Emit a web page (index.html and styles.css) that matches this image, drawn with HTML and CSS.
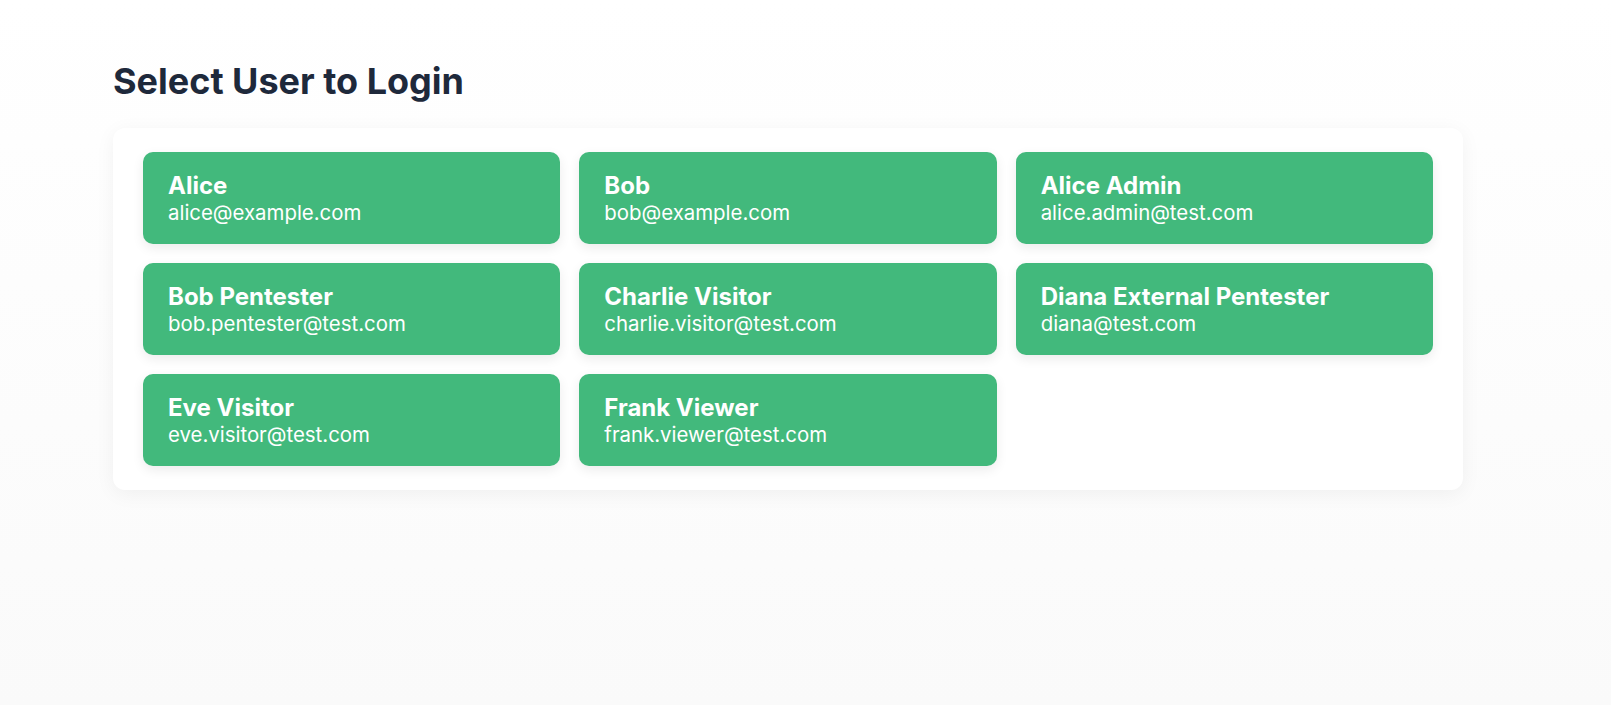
FILE: index.html
```html
<!DOCTYPE html>
<html lang="en">
<head>
<meta charset="utf-8">
<title>Select User to Login</title>
<link rel="stylesheet" href="styles.css">
</head>
<body>
<main class="page">
  <h1 class="title">Select User to Login</h1>
  <section class="panel">
    <div class="grid">
      <button class="user"><span class="name">Alice</span><span class="email">alice@example.com</span></button>
      <button class="user"><span class="name">Bob</span><span class="email">bob@example.com</span></button>
      <button class="user"><span class="name">Alice Admin</span><span class="email">alice.admin@test.com</span></button>
      <button class="user"><span class="name">Bob Pentester</span><span class="email">bob.pentester@test.com</span></button>
      <button class="user"><span class="name">Charlie Visitor</span><span class="email">charlie.visitor@test.com</span></button>
      <button class="user"><span class="name">Diana External Pentester</span><span class="email">diana@test.com</span></button>
      <button class="user"><span class="name">Eve Visitor</span><span class="email">eve.visitor@test.com</span></button>
      <button class="user"><span class="name">Frank Viewer</span><span class="email">frank.viewer@test.com</span></button>
    </div>
  </section>
</main>
</body>
</html>
```
FILE: styles.css
```css
* { box-sizing: border-box; }
html, body { margin: 0; height: 100%; }
body {
  font-family: Inter, "Noto Sans", sans-serif;
  background: linear-gradient(180deg, #ffffff 0%, #fafafa 100%);
  min-height: 705px;
}
.page {
  padding: 59px 148px 0 113px;
}
.title {
  margin: 0 0 25px 0;
  font-size: 36px;
  line-height: 44px;
  font-weight: 700;
  color: #1e293b;
}
.panel {
  background: #fff;
  border-radius: 12px;
  padding: 24px 30px;
  box-shadow: 0 4px 20px rgba(0, 0, 0, 0.05);
}
.grid {
  display: grid;
  grid-template-columns: repeat(3, 1fr);
  gap: 19px;
}
.user {
  display: flex;
  flex-direction: column;
  align-items: flex-start;
  height: 92px;
  padding: 19px 25px 0;
  border: none;
  border-radius: 10px;
  background: #42b97c;
  color: #fff;
  font-family: inherit;
  text-align: left;
  box-shadow: 0 4px 12px rgba(0, 0, 0, 0.08);
  cursor: pointer;
}
.name {
  font-size: 24px;
  line-height: 29px;
  font-weight: 700;
}
.email {
  font-size: 20.4px;
  line-height: 26px;
  font-weight: 400;
}
```
